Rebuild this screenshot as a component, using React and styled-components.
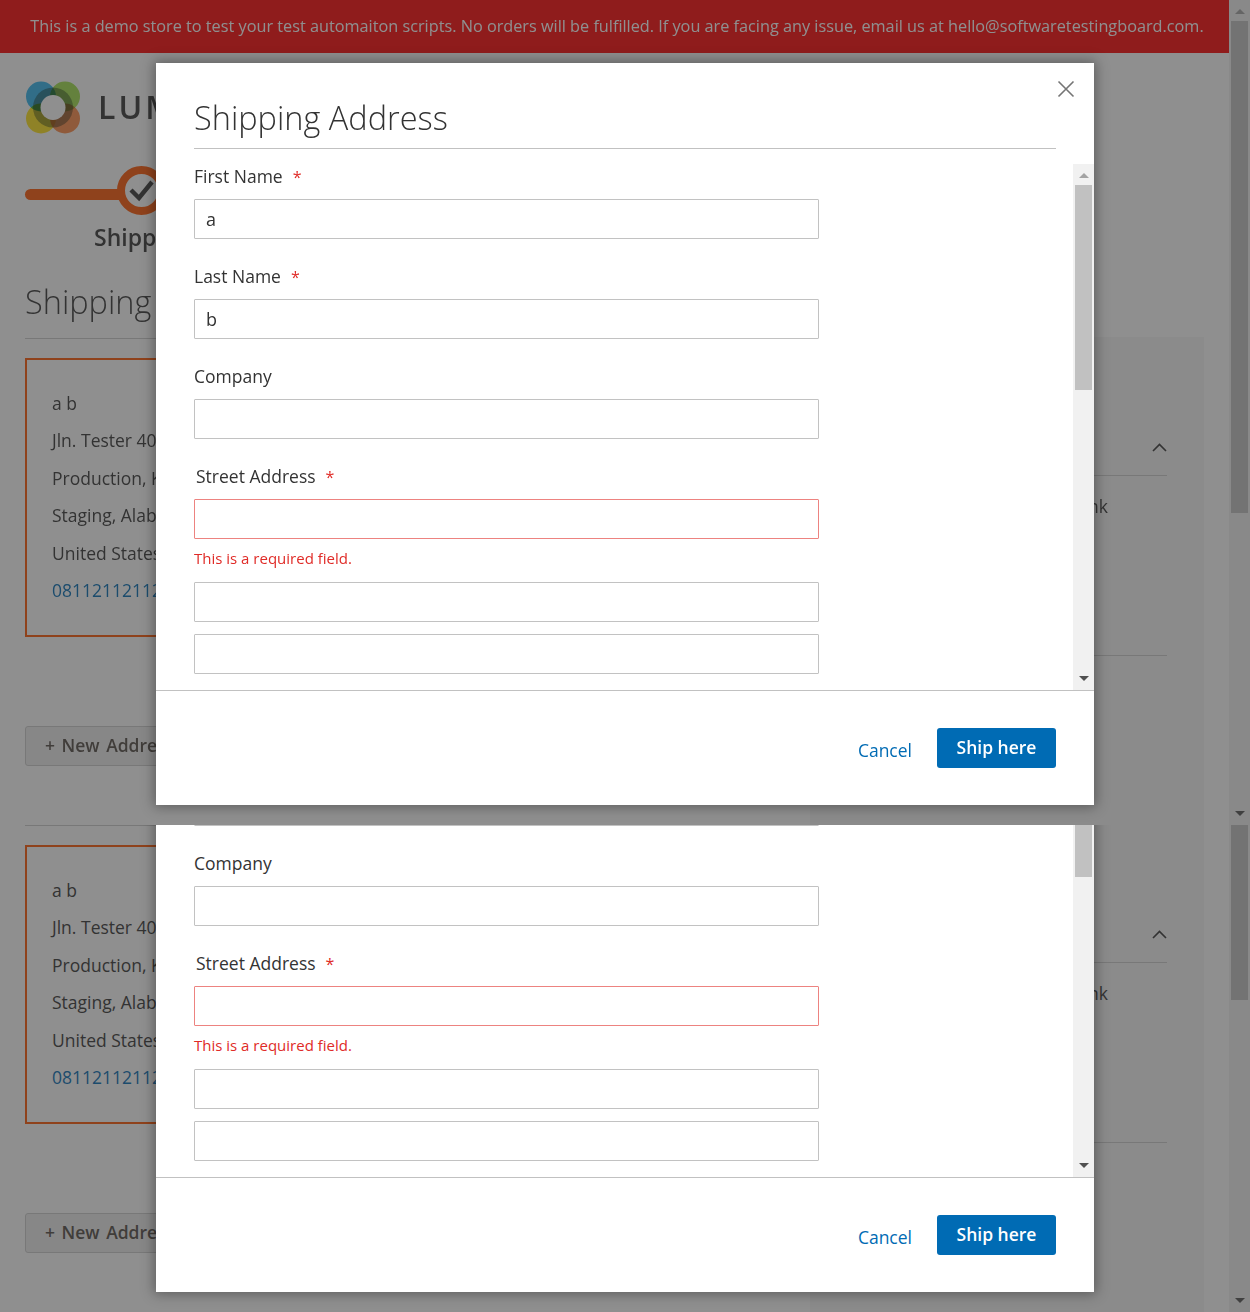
import React from "react";
import styled, { createGlobalStyle } from "styled-components";

const Global = createGlobalStyle`
  html, body { margin: 0; padding: 0; background: #fff; }
  body { font-family: "Open Sans", "Liberation Sans", sans-serif; color: #333; font-size: 17.5px; }
  * { box-sizing: border-box; }
`;

const Frame = styled.div`
  width: 1250px;
  height: ${(p) => p.$height}px;
  overflow: hidden;
`;

const Scene = styled.div`
  position: relative;
  display: flex;
  width: 1250px;
  height: 825px;
  margin-top: ${(p) => -p.$scroll}px;
  overflow: hidden;
`;

const Page = styled.div`
  width: 1229px;
  height: 825px;
  background: #fff;
  display: flex;
  flex-direction: column;
`;

const Banner = styled.div`
  flex: 0 0 53px;
  padding-left: 5px;
  background: #f00;
  color: #fff;
  font-size: 16.25px;
  line-height: 53px;
  text-align: center;
  white-space: nowrap;
`;

const LogoRow = styled.div`
  display: flex;
  align-items: center;
  gap: 18px;
  padding: 28px 25px 0 26px;
`;

const LogoText = styled.span`
  font-size: 32px;
  font-weight: 600;
  letter-spacing: 3px;
  line-height: 49px;
  padding-bottom: 2px;
`;

const Progress = styled.div`
  padding: 32px 0 0 25px;
`;

const StepTrack = styled.div`
  display: flex;
  align-items: center;
  height: 49px;
`;

const StepBar = styled.div`
  width: 115px;
  height: 11px;
  margin-top: 8px;
  border-radius: 6px;
  background: #ff5501;
`;

const StepRing = styled.div`
  width: 49px;
  height: 49px;
  margin-left: -23px;
  border: 8px solid #ff5501;
  border-radius: 50%;
  background: #fff;
  display: flex;
  align-items: center;
  justify-content: center;
`;

const StepLabel = styled.div`
  margin: 7px 0 0 69px;
  font-size: 23px;
  font-weight: 600;
  line-height: 30px;
`;

const Columns = styled.div`
  flex: 1;
  display: flex;
  justify-content: space-between;
  padding: 28px 25px 0;
`;

const MainColumn = styled.div`
  width: 760px;
`;

const Heading = styled.h2`
  margin: 0;
  padding-bottom: 14px;
  border-bottom: 1px solid #ccc;
  font-size: 32.5px;
  font-weight: 300;
  line-height: 44px;
`;

const AddressCard = styled.div`
  width: 300px;
  height: 279px;
  margin-top: 19px;
  padding: 24.5px 25px;
  border: 2px solid #ff5501;
  line-height: 37.5px;
  white-space: nowrap;
`;

const Phone = styled.a`
  color: #006bb4;
  display: block;
`;

const NewAddress = styled.button`
  display: block;
  width: 180px;
  height: 40px;
  margin-top: 89px;
  padding: 0 0 2px 19px;
  border: 1px solid #ccc;
  border-radius: 3px;
  background: #eee;
  color: #514943;
  font: 600 17.5px/34px "Open Sans", sans-serif;
  word-spacing: 2px;
  text-align: left;
  white-space: nowrap;
`;

const Sidebar = styled.aside`
  width: 394px;
  margin-top: 57px;
  padding: 0 37px;
  background: #f5f5f5;
`;

const SummaryTitle = styled.div`
  font-size: 26px;
  font-weight: 300;
  padding-top: 28px;
  line-height: 36px;
`;

const SummaryRow = styled.div`
  display: flex;
  align-items: center;
  justify-content: space-between;
  height: 75px;
  padding-top: 18px;
  border-bottom: 1px solid #ccc;
`;

const SummaryItem = styled.div`
  height: 180px;
  padding: 17px 59px 0 0;
  border-bottom: 1px solid #ccc;
  line-height: 26px;
  text-align: right;
`;

const Track = styled.div`
  flex: 0 0 21px;
  width: 21px;
  height: ${(p) => p.$height}px;
  background: #f1f1f1;
  display: flex;
  flex-direction: column;
  align-items: center;
`;

const ArrowCell = styled.div`
  flex: 0 0 21px;
  display: flex;
  align-items: center;
  justify-content: center;
  &::before {
    content: "";
    border-left: 5px solid transparent;
    border-right: 5px solid transparent;
    ${(p) =>
      p.$up
        ? "border-bottom: 5px solid #a3a3a3; margin-top: 2px;"
        : "border-top: 5px solid #505050; margin-top: -3px;"}
  }
`;

const Thumb = styled.div`
  flex: 0 0 ${(p) => p.$size}px;
  width: 17px;
  background: #c1c1c1;
`;

const Filler = styled.div`
  flex: 1;
`;

const Overlay = styled.div`
  position: absolute;
  inset: 0;
  background: rgba(51, 51, 51, 0.55);
`;

const Modal = styled.div`
  position: absolute;
  top: 63px;
  left: 156px;
  width: 938px;
  height: 742px;
  background: #fff;
  box-shadow: 0 0 12px 2px rgba(0, 0, 0, 0.35);
  display: flex;
  flex-direction: column;
`;

const ModalHeader = styled.header`
  flex: 0 0 86px;
  margin: 0 38px 15px;
  border-bottom: 1px solid #c1c1c1;
  display: flex;
  align-items: flex-end;
`;

const ModalTitle = styled.h1`
  margin: 0 0 8px;
  font-size: 32.5px;
  font-weight: 300;
  line-height: 44px;
`;

const CloseButton = styled.button`
  position: absolute;
  top: 17px;
  right: 19px;
  width: 18px;
  height: 18px;
  padding: 0;
  border: 0;
  background: none;
  display: flex;
`;

const ModalBody = styled.div`
  flex: 0 0 526px;
  display: flex;
  overflow: hidden;
`;

const Form = styled.div`
  flex: 1;
  padding-left: 38px;
`;

const Field = styled.div`
  margin-bottom: 25px;
`;

const Label = styled.label`
  display: block;
  height: 25px;
  margin-bottom: 10px;
  padding-left: ${(p) => (p.$indent ? 2 : 0)}px;
  line-height: 25px;
`;

const Star = styled.span`
  margin-left: 10px;
  color: #e02b27;
  font-size: 16px;
`;

const Input = styled.input`
  display: block;
  width: 625px;
  height: 40px;
  padding: 0 11px;
  border: 1px solid ${(p) => (p.$error ? "#ed8380" : "#c2c2c2")};
  border-radius: 1px;
  background: #fff;
  color: #333;
  font: 400 18px "Open Sans", sans-serif;
  outline: none;
  margin-bottom: ${(p) => p.$gap || 0}px;
`;

const ErrorText = styled.div`
  margin: 9px 0 14px;
  color: #e02b27;
  font-size: 15px;
  line-height: 20px;
`;

const ModalFooter = styled.footer`
  flex: 1;
  border-top: 1px solid #c1c1c1;
  padding: 37px 38px 0 0;
  display: flex;
  justify-content: flex-end;
  align-items: flex-start;
  gap: 25px;
`;

const CancelLink = styled.a`
  color: #006bb4;
  line-height: 26px;
  padding-top: 9px;
`;

const ShipButton = styled.button`
  width: 119px;
  height: 40px;
  padding: 0 0 2px;
  border: 0;
  border-radius: 3px;
  background: #006bb4;
  color: #fff;
  font: 600 17.5px/34px "Open Sans", sans-serif;
`;

const Logo = () => (
  <svg width="54" height="53" viewBox="0 0 54 53">
    <g style={{ isolation: "isolate" }}>
      <circle cx="15" cy="15.5" r="15" fill="#2fb4ee" style={{ mixBlendMode: "multiply" }} />
      <circle cx="39" cy="15.5" r="15" fill="#9fe04a" style={{ mixBlendMode: "multiply" }} />
      <circle cx="15" cy="37.5" r="15" fill="#ffe21a" style={{ mixBlendMode: "multiply" }} />
      <circle cx="39" cy="37.5" r="15" fill="#ff8a45" style={{ mixBlendMode: "multiply" }} />
      <circle cx="27" cy="26.5" r="20" fill="#7f8f7f" style={{ mixBlendMode: "multiply" }} opacity=".8" />
    </g>
    <circle cx="27" cy="26.5" r="12.5" fill="#fff" />
  </svg>
);

const CheckMark = () => (
  <svg width="33" height="33" viewBox="0 0 33 33">
    <path d="M6 16 L14 24 L27 8" fill="none" stroke="#333" strokeWidth="4.4" />
  </svg>
);

const Chevron = () => (
  <svg width="15" height="9" viewBox="0 0 15 9">
    <path d="M1 8 L7.5 1.5 L14 8" fill="none" stroke="#333" strokeWidth="1.6" />
  </svg>
);

const CloseIcon = () => (
  <svg width="18" height="18" viewBox="0 0 18 18">
    <path d="M1.5 1.5 L16.5 16.5 M16.5 1.5 L1.5 16.5" stroke="#757575" strokeWidth="1.6" fill="none" />
  </svg>
);

const Scrollbar = ({ height, thumb }) => (
  <Track $height={height}>
    <ArrowCell $up />
    <Thumb $size={thumb} />
    <Filler />
    <ArrowCell />
  </Track>
);

const ViewScene = ({ scroll = 0 }) => (
  <Scene $scroll={scroll}>
    <Page>
      <Banner>
        This is a demo store to test your test automaiton scripts. No orders will be fulfilled. If you are facing any issue, email us at hello@softwaretestingboard.com.
      </Banner>
      <LogoRow>
        <Logo />
        <LogoText>LUMA</LogoText>
      </LogoRow>
      <Progress>
        <StepTrack>
          <StepBar />
          <StepRing>
            <CheckMark />
          </StepRing>
        </StepTrack>
        <StepLabel>Shipping</StepLabel>
      </Progress>
      <Columns>
        <MainColumn>
          <Heading>Shipping Address</Heading>
          <AddressCard>
            a b
            <br />
            Jln. Tester 40
            <br />
            Production, Kansas
            <br />
            Staging, Alabama 35004
            <br />
            United States
            <Phone>08112112112</Phone>
          </AddressCard>
          <NewAddress>+ New Address</NewAddress>
        </MainColumn>
        <Sidebar>
          <SummaryTitle>Order Summary</SummaryTitle>
          <SummaryRow>
            <span>1 Item in Cart</span>
            <Chevron />
          </SummaryRow>
          <SummaryItem>Breathe-Easy Tank</SummaryItem>
        </Sidebar>
      </Columns>
    </Page>
    <Scrollbar height={825} thumb={492} />
    <Overlay />
    <Modal>
      <ModalHeader>
        <ModalTitle>Shipping Address</ModalTitle>
      </ModalHeader>
      <CloseButton aria-label="Close">
        <CloseIcon />
      </CloseButton>
      <ModalBody>
        <Form>
          <Field>
            <Label>
              First Name<Star>*</Star>
            </Label>
            <Input value="a" readOnly />
          </Field>
          <Field>
            <Label>
              Last Name<Star>*</Star>
            </Label>
            <Input value="b" readOnly />
          </Field>
          <Field>
            <Label>Company</Label>
            <Input readOnly />
          </Field>
          <Field>
            <Label $indent>
              Street Address<Star>*</Star>
            </Label>
            <Input $error readOnly />
            <ErrorText>This is a required field.</ErrorText>
            <Input readOnly $gap={12} />
            <Input readOnly />
          </Field>
        </Form>
        <Scrollbar height={526} thumb={205} />
      </ModalBody>
      <ModalFooter>
        <CancelLink>Cancel</CancelLink>
        <ShipButton>Ship here</ShipButton>
      </ModalFooter>
    </Modal>
  </Scene>
);

export default function App() {
  return (
    <>
      <Global />
      <Frame $height={825}>
        <ViewScene />
      </Frame>
      <Frame $height={487}>
        <ViewScene scroll={338} />
      </Frame>
    </>
  );
}
